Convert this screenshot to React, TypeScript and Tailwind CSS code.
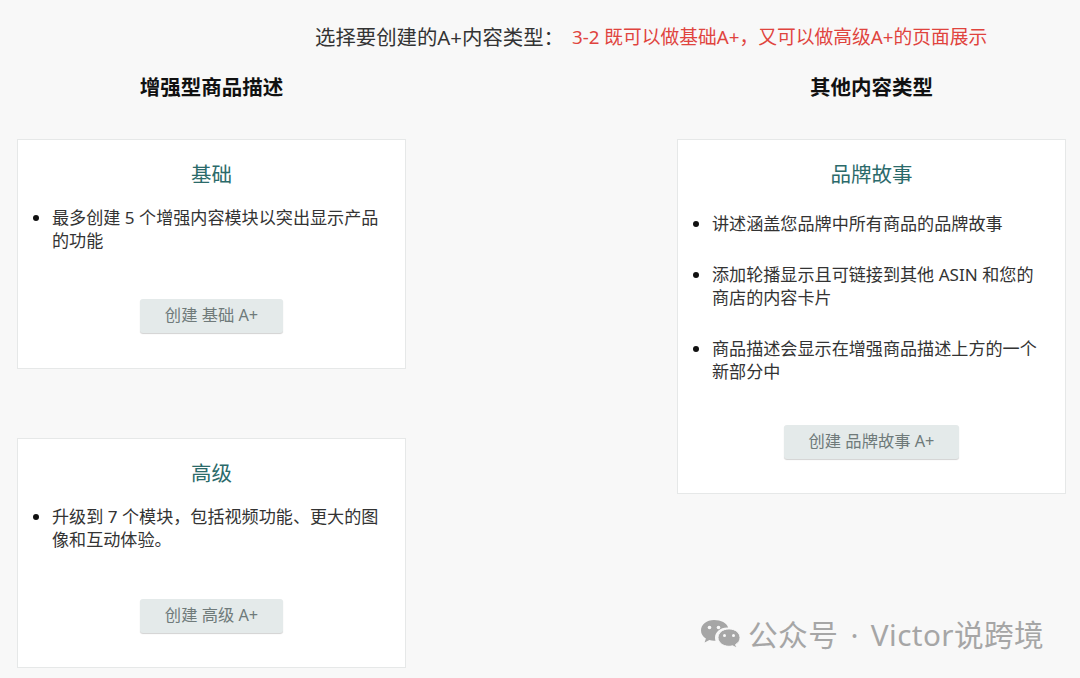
const font = "font-['Noto_Sans','Noto_Sans_CJK_SC',sans-serif]";

function Card({ title, items, button, gap = false, className = "", buttonClass = "mb-[35px]" }: { title: string; items: string[]; button: string; gap?: boolean; className?: string; buttonClass?: string }) {
  return (
    <div className={`w-[389px] bg-white border border-[#e6e8e8] flex flex-col items-center ${className}`}>
      <h3 className="mt-[19px] text-[20.500px] leading-[30px] text-[#2b6a6a]">{title}</h3>
      <ul className={`w-full pl-[34px] pr-[20px] list-disc list-outside text-[17.100px] leading-[23px] text-[#333] flex-1 marker:text-[#111] ${gap ? "mt-[23px] flex flex-col gap-[28px]" : "mt-[17px]"}`}>
        {items.map((t) => (
          <li key={t}>{t}</li>
        ))}
      </ul>
      <button className={`h-[34px] px-[24.500px] pb-[2px] rounded-[3px] bg-[#e4eaea] text-[#6f7a7a] text-[16.300px] shadow-[0_1px_1px_rgba(0,0,0,0.18)] ${buttonClass}`}>
        {button}
      </button>
    </div>
  );
}

function WeChat() {
  return (
    <svg width="41" height="33" viewBox="0 0 41 33" fill="#a6a6a6" className="shrink-0">
      <path d="M14 1C6.800 1 1 5.600 1 11.400c0 3.300 1.900 6.100 4.900 8L4.600 23.600l4.800-2.500c1.500.4 3 .7 4.600.7.500 0 1 0 1.500-.1-.3-1-.5-2-.5-3 0-5.600 5.400-10.100 12-10.100.4 0 .8 0 1.200.1C26.900 4 21 1 14 1z" />
      <path d="M40 18.600c0-4.800-4.800-8.700-11-8.700s-11 3.900-11 8.700 4.800 8.700 11 8.700c1.300 0 2.500-.2 3.700-.5l4 2.300-1.100-3.600c2.700-1.600 4.400-3.900 4.400-6.600z" stroke="#f8f8f8" strokeWidth="1" />
      <circle cx="9.500" cy="8.500" r="1.800" fill="#f8f8f8" />
      <circle cx="18.500" cy="8.500" r="1.800" fill="#f8f8f8" />
      <circle cx="24.500" cy="16.500" r="1.500" fill="#f8f8f8" />
      <circle cx="33.500" cy="16.500" r="1.500" fill="#f8f8f8" />
    </svg>
  );
}

export default function App() {
  return (
    <div className={`relative w-[1080px] h-[678px] overflow-hidden bg-[#f8f8f8] ${font}`}>
      <div className="flex items-center h-[34px] mt-[20px] pl-[315px]">
        <span className="text-[20.400px] text-[#333]">选择要创建的A+内容类型：</span>
        <span className="ml-[8px] text-[18.750px] text-[#e0443e]">3-2 既可以做基础A+，又可以做高级A+的页面展示</span>
      </div>
      <div className="flex justify-between pl-[17px] pr-[14px] mt-[18px]">
        <div className="w-[389px] flex flex-col">
          <h2 className="text-center font-bold text-[20.500px] leading-[30px] text-[#111]">增强型商品描述</h2>
          <Card
            className="mt-[37px] h-[230px]"
            title="基础"
            items={["最多创建 5 个增强内容模块以突出显示产品的功能"]}
            button="创建 基础 A+"
          />
          <Card
            className="mt-[69px] h-[230px]"
            buttonClass="mb-[34px]"
            title="高级"
            items={["升级到 7 个模块，包括视频功能、更大的图像和互动体验。"]}
            button="创建 高级 A+"
          />
        </div>
        <div className="w-[389px] flex flex-col">
          <h2 className="text-center font-bold text-[20.500px] leading-[30px] text-[#111]">其他内容类型</h2>
          <Card
            className="mt-[37px] h-[355px]"
            buttonClass="mb-[34px]"
            gap
            title="品牌故事"
            items={[
              "讲述涵盖您品牌中所有商品的品牌故事",
              "添加轮播显示且可链接到其他 ASIN 和您的商店的内容卡片",
              "商品描述会显示在增强商品描述上方的一个新部分中",
            ]}
            button="创建 品牌故事 A+"
          />
        </div>
      </div>
      <div className="absolute left-[700px] top-[617px] flex items-center gap-[7px]">
        <WeChat />
        <span className="text-[29.700px] leading-[36px] text-[#a6a6a6] tracking-[0.400px] [word-spacing:4px]">公众号 · Victor说跨境</span>
      </div>
    </div>
  );
}
